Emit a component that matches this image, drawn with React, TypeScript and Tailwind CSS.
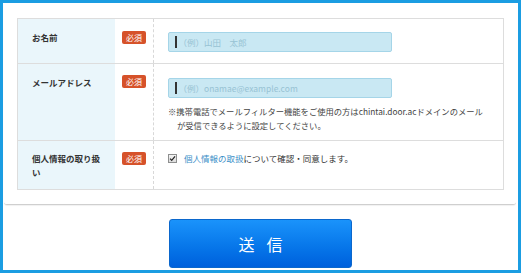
const jp = "font-['Noto_Sans_CJK_JP','Noto_Sans',sans-serif]";

const Badge = () => (
  <span className="flex h-[13px] w-[24px] items-center justify-center rounded-[2px] bg-[#d6522a] text-[8px] leading-none text-white">
    必須
  </span>
);

const Field = ({ placeholder }: { placeholder: string }) => (
  <div className="flex h-[20px] w-[224px] items-center rounded-[2px] border border-[#a5d5e8] bg-[#c9e8f3] pl-[6px]">
    <span className="mr-[2px] h-[12px] w-[1.5px] bg-[#333]" />
    <span className="text-[8.5px] text-[#98c3d3]">{placeholder}</span>
  </div>
);

export default function App() {
  return (
    <div className={`${jp} h-[273px] w-[521px] border-[3px] border-[#1b9de2] bg-white`}>
      {/* form card */}
      <div className="ml-[1px] mr-[2px] rounded-b-[3px] border-b border-[#cfcfcf] pb-[14px] pl-[13px] pr-[12px] pt-[15px] shadow-[0_1px_1px_rgba(0,0,0,0.06)]">
        <div className="border border-[#dddddd] text-[#333]">
          {/* name */}
          <div className="grid h-[45px] grid-cols-[97px_39px_1fr] border-b border-[#dddddd]">
            <div className="bg-[#eaf6fb] pl-[14px] pt-[11px] text-[8.5px] font-bold leading-[14px]">お名前</div>
            <div className="border-r border-dashed border-[#d8d8d8] pl-[7px] pt-[12px]">
              <Badge />
            </div>
            <div className="pl-[14px] pt-[13px]">
              <Field placeholder="（例）山田　太郎" />
            </div>
          </div>

          {/* mail */}
          <div className="grid h-[77px] grid-cols-[97px_39px_1fr] border-b border-[#dddddd]">
            <div className="bg-[#eaf6fb] pl-[14px] pt-[11px] text-[8.5px] font-bold leading-[14px]">メールアドレス</div>
            <div className="border-r border-dashed border-[#d8d8d8] pl-[7px] pt-[11px]">
              <Badge />
            </div>
            <div className="pl-[14px] pt-[14px]">
              <Field placeholder="（例）onamae@example.com" />
              <p className="mt-[6px] text-[8.3px] leading-[14px] text-[#444]">
                ※携帯電話でメールフィルター機能をご使用の方はchintai.door.acドメインのメール
                <br />
                <span className="pl-[9px]">が受信できるように設定してください。</span>
              </p>
            </div>
          </div>

          {/* privacy */}
          <div className="grid h-[48px] grid-cols-[97px_39px_1fr]">
            <div className="bg-[#eaf6fb] pl-[14px] pr-[8px] pt-[10px] text-[8.5px] font-bold leading-[14px]">
              個人情報の取り扱い
            </div>
            <div className="border-r border-dashed border-[#d8d8d8] pl-[7px] pt-[11px]">
              <Badge />
            </div>
            <div className="flex items-start pl-[14px] pt-[12px]">
              <span className="mr-[7px] mt-[1px] flex h-[9px] w-[9px] items-center justify-center border border-[#8e8f8f] bg-gradient-to-b from-[#f4f4f4] to-[#dcdcdc]">
                <svg viewBox="0 0 8 8" className="h-[7px] w-[7px]">
                  <path d="M1.2 4.2 L3.1 6.1 L6.9 1.6" fill="none" stroke="#222" strokeWidth="1.4" />
                </svg>
              </span>
              <span className="text-[8.5px] leading-[11px]">
                <a className="text-[#3b8fc8]">個人情報の取扱</a>について確認・同意します。
              </span>
            </div>
          </div>
        </div>
      </div>

      {/* submit */}
      <div className="pl-[166px] pt-[14px]">
        <button className="flex h-[49px] w-[183px] items-center justify-center rounded-[3px] border border-[#0b67cc] bg-gradient-to-b from-[#1a93fb] to-[#0060dc] text-[16px] tracking-[12px] text-white">
          <span className="pl-[12px]">送信</span>
        </button>
      </div>
    </div>
  );
}
